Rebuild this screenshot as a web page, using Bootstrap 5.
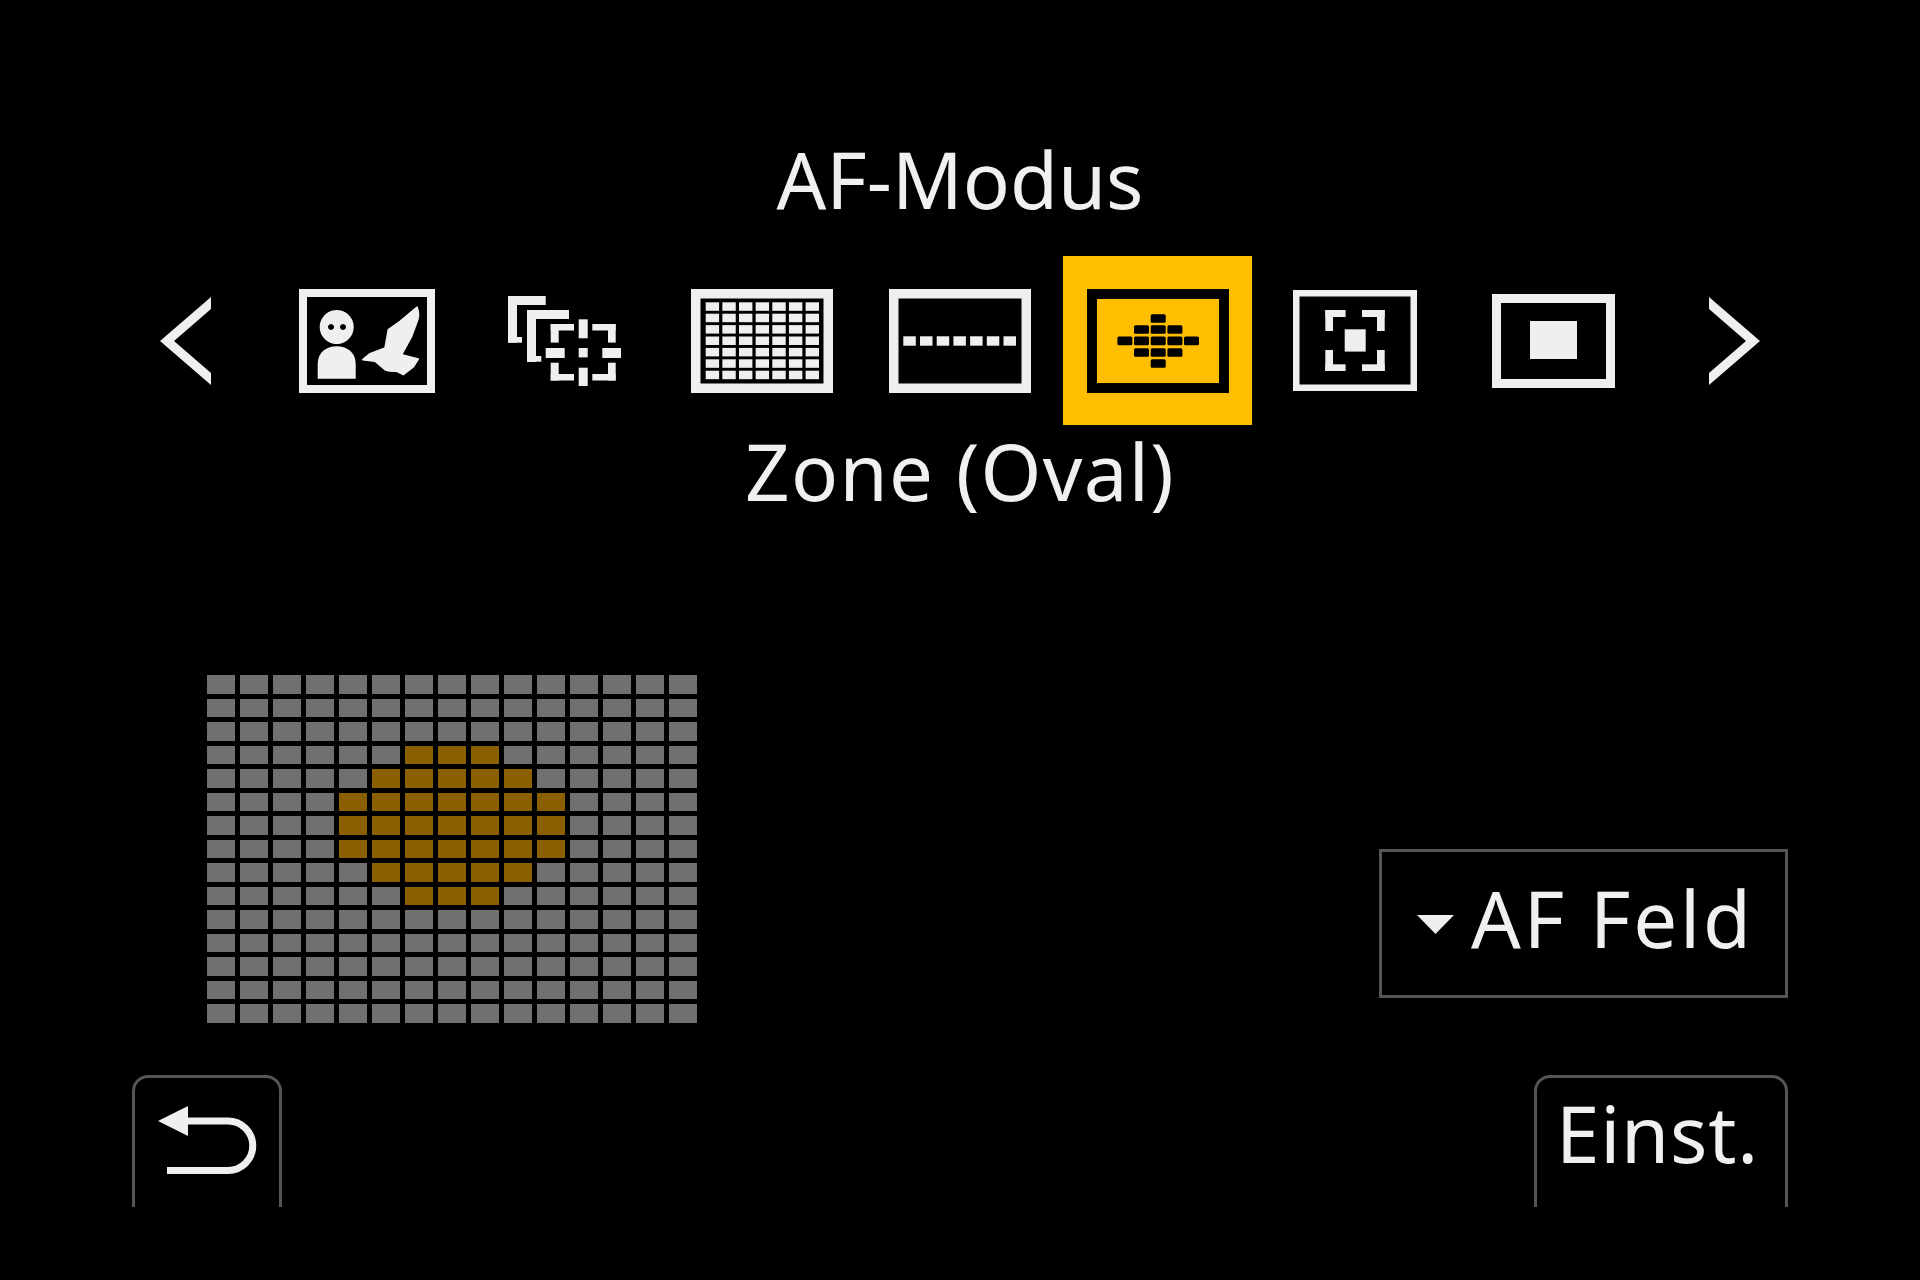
<!DOCTYPE html>
<html lang="en">

<head>
    <meta charset="UTF-8">
    <meta name="viewport" content="width=device-width, initial-scale=1.0">
    <title>AF-Modus</title>
    <link href="https://cdn.jsdelivr.net/npm/bootstrap@5.3.1/dist/css/bootstrap.min.css" rel="stylesheet">
    <style>
        body { background: #000; color: #f0f0f0; font-family: "Noto Sans", sans-serif; }
        .cam-screen { width: 1920px; height: 1280px; padding-top: 140px; filter: blur(.6px); overflow: hidden; }
        .cam-text { font-size: 78px; line-height: 1; }
        .cam-title { margin-bottom: 38px; }
        .cam-label { margin-top: 7px; letter-spacing: 1.3px; }
        .cam-strip { height: 169px; }
        .cam-arrow { width: 165px; }
        .cam-slot { width: 197.7px; height: 169px; }
        .cam-slot.is-active { background: #ffbe00; background-clip: content-box; padding: 0 4.35px; }
        svg { display: block; fill: #efefef; }
        .is-active svg { fill: #000; }
        .cam-middle { margin-top: 165px; padding: 0 132px; height: 348px; }
        .af-grid { margin-left: 74.5px; width: 490px; height: 348px; display: grid; grid-template-columns: repeat(15, 1fr); grid-template-rows: repeat(15, 1fr); column-gap: 5px; row-gap: 5px; }
        .af-cell { background: #707070; }
        .af-cell.is-on { background: #8a5f00; }
        .af-field { width: 409px; height: 149px; margin-top: 174px; padding: 27px 0 0 35px; border: 3px solid #555; gap: 17px; letter-spacing: 2.8px; }
        .af-field svg { margin-top: 36px; }
        .cam-bottom { margin-top: 52px; padding: 0 132px; }
        .cam-tab { height: 132px; border: 3px solid #555; border-bottom: 0; border-radius: 16px 16px 0 0; }
        .cam-back { width: 150px; padding-top: 28px; }
        .cam-set { width: 254px; padding: 16px 0 0 19px; letter-spacing: .8px; }
        .bird-shape { stroke: #efefef; stroke-width: 1.5; stroke-linejoin: round; }
    </style>
</head>

<body>
    <div class="cam-screen">
        <div class="cam-text cam-title text-center">AF-Modus</div>

        <!-- Mode strip -->
        <div class="cam-strip d-flex justify-content-center align-items-center">
            <div class="cam-arrow d-flex justify-content-center">
                <svg width="51" height="88" viewBox="0 0 51 88"><polygon points="51,0 0,44 51,88 51,76 14,44 51,12"/></svg>
            </div>

            <div class="cam-slot d-flex justify-content-center align-items-center">
                <svg width="136" height="104" viewBox="0 0 136 104">
                    <path fill-rule="evenodd" d="M0 0H136V104H0ZM8 8V96H128V8Z"/>
                    <path fill-rule="evenodd" d="M37.7 21a17 17 0 1 0 .01 0ZM32 35a3 3 0 1 0 .01 0ZM44 35a3 3 0 1 0 .01 0Z"/>
                    <path d="M18.7 89.7V75C18.7 63 28 57.3 37.7 57.3S56.7 63 56.7 75V89.7Z"/>
                    <path class="bird-shape" d="M118 18C120 23 120 27 118.7 31L112.7 47.3 102.7 65.7 119.3 70 114.3 78 104.3 85.7 97.7 82.3C93 82.5 89 82 86 80.7L76 72.3 63.7 70.7 71 64.7 86 59 89.3 40.7 101 32.3Z"/>
                </svg>
            </div>

            <div class="cam-slot d-flex justify-content-center align-items-center">
                <svg width="113" height="90" viewBox="0 0 113 90">
                    <rect x="0" y="0" width="37.7" height="9"/><rect x="0" y="0" width="9" height="46.7"/><rect x="0" y="41" width="14" height="5.7"/>
                    <rect x="19" y="14" width="42" height="9"/><rect x="19" y="14" width="9" height="52"/><rect x="19" y="60" width="14.3" height="5.7"/>
                    <rect x="42.7" y="28" width="23.3" height="6.5"/><rect x="42.7" y="28" width="8" height="18.6"/>
                    <rect x="84.3" y="28" width="23.3" height="6.5"/><rect x="100" y="28" width="7.7" height="18.6"/>
                    <rect x="42.7" y="78" width="23.3" height="6.5"/><rect x="42.7" y="66.7" width="8" height="17.8"/>
                    <rect x="84.3" y="78" width="23.3" height="6.5"/><rect x="100" y="66.7" width="7.7" height="17.8"/>
                    <rect x="70.7" y="23.3" width="9" height="19"/><rect x="70.7" y="71.7" width="9" height="18.3"/>
                    <rect x="37.7" y="52" width="19" height="10"/><rect x="94.3" y="52" width="18.7" height="10"/>
                    <rect x="70.7" y="52" width="9" height="9.4"/>
                </svg>
            </div>

            <div class="cam-slot d-flex justify-content-center align-items-center">
                <svg id="iconAll" width="142" height="104" viewBox="0 0 142 104">
                    <path fill-rule="evenodd" d="M0 0H142V104H0ZM9.5 9.5V94.5H132.5V9.5Z"/>
                </svg>
            </div>

            <div class="cam-slot d-flex justify-content-center align-items-center">
                <svg id="iconLine" width="142" height="104" viewBox="0 0 142 104">
                    <path fill-rule="evenodd" d="M0 0H142V104H0ZM9.5 9.5V94.5H132.5V9.5Z"/>
                </svg>
            </div>

            <div class="cam-slot is-active d-flex justify-content-center align-items-center">
                <svg id="iconZone" width="142" height="104" viewBox="0 0 142 104">
                    <path fill-rule="evenodd" d="M0 0H142V104H0ZM10 10V94H132V10Z"/>
                </svg>
            </div>

            <div class="cam-slot d-flex justify-content-center align-items-center">
                <svg width="124" height="101" viewBox="0 0 124 101">
                    <path fill-rule="evenodd" d="M0 0H124V101H0ZM6.5 6.5V94.5H117.5V6.5Z"/>
                    <rect x="32.3" y="20" width="20.3" height="7"/><rect x="32.3" y="20" width="7.7" height="21"/>
                    <rect x="69" y="20" width="22.7" height="7"/><rect x="84" y="20" width="7.7" height="21"/>
                    <rect x="32.3" y="74.3" width="20.3" height="6.7"/><rect x="32.3" y="60" width="7.7" height="21"/>
                    <rect x="69" y="74.3" width="22.7" height="6.7"/><rect x="84" y="60" width="7.7" height="21"/>
                    <rect x="51.7" y="39.3" width="21" height="22.3"/>
                </svg>
            </div>

            <div class="cam-slot d-flex justify-content-center align-items-center">
                <svg width="123" height="94" viewBox="0 0 123 94">
                    <path fill-rule="evenodd" d="M0 0H123V94H0ZM9 9V85H114V9Z"/>
                    <rect x="38" y="27" width="47" height="38"/>
                </svg>
            </div>

            <div class="cam-arrow d-flex justify-content-center">
                <svg width="51" height="88" viewBox="0 0 51 88"><polygon points="0,0 51,44 0,88 0,76 37,44 0,12"/></svg>
            </div>
        </div>

        <div class="cam-text cam-label text-center">Zone (Oval)</div>

        <!-- AF area preview and field button -->
        <div class="cam-middle d-flex justify-content-between align-items-start">
            <div class="af-grid" id="afGrid"></div>
            <div class="af-field d-flex align-items-start cam-text">
                <svg width="37" height="19" viewBox="0 0 37 19"><polygon points="0,0 37,0 18.5,19"/></svg>
                <span>AF Feld</span>
            </div>
        </div>

        <!-- Bottom tabs -->
        <div class="cam-bottom d-flex justify-content-between">
            <div class="cam-tab cam-back d-flex justify-content-center">
                <svg width="99" height="68" viewBox="0 0 99 68">
                    <polygon points="0,15 30,0 30,30"/>
                    <path d="M28 15H70A24.75 24.75 0 0 1 70 64.5H9" fill="none" stroke="#efefef" stroke-width="7"/>
                </svg>
            </div>
            <div class="cam-tab cam-set cam-text">Einst.</div>
        </div>
    </div>

    <script src="https://cdn.jsdelivr.net/npm/bootstrap@5.3.1/dist/js/bootstrap.bundle.min.js"></script>
    <script>
        // Lit zone of the 15x15 AF grid: first and last lit column per row
        const litColumns = { 3: [6, 8], 4: [5, 9], 5: [4, 10], 6: [4, 10], 7: [4, 10], 8: [5, 9], 9: [6, 8] };
        const afGrid = document.getElementById('afGrid');
        for (let r = 0; r < 15; r++) {
            for (let c = 0; c < 15; c++) {
                const cell = document.createElement('div');
                const lit = litColumns[r];
                cell.className = 'af-cell' + (lit && c >= lit[0] && c <= lit[1] ? ' is-on' : '');
                afGrid.appendChild(cell);
            }
        }

        function addRect(svg, x, y, w, h, rx) {
            const rect = document.createElementNS('http://www.w3.org/2000/svg', 'rect');
            rect.setAttribute('x', x);
            rect.setAttribute('y', y);
            rect.setAttribute('width', w);
            rect.setAttribute('height', h);
            if (rx) rect.setAttribute('rx', rx);
            svg.appendChild(rect);
        }

        // Small dots inside the mode icons
        const iconAll = document.getElementById('iconAll');
        for (let r = 0; r < 7; r++) {
            for (let c = 0; c < 7; c++) {
                addRect(iconAll, 14.7 + c * 16.65, 13.3 + r * 11.4, 13.4, 8.5);
            }
        }
        const iconLine = document.getElementById('iconLine');
        for (let c = 0; c < 7; c++) {
            addRect(iconLine, 14.3 + c * 16.7, 47.3, 12.5, 9.4);
        }
        const iconZone = document.getElementById('iconZone');
        const zoneX = [30.4, 47, 63.7, 80.4, 97];
        const zoneRows = [[25.2, 2, 2], [36.2, 1, 3], [47.6, 0, 4], [59.2, 1, 3], [70.2, 2, 2]];
        zoneRows.forEach(([y, from, to]) => {
            for (let c = from; c <= to; c++) {
                addRect(iconZone, zoneX[c], y, 15, 8.6, 1.5);
            }
        });
    </script>
</body>

</html>
